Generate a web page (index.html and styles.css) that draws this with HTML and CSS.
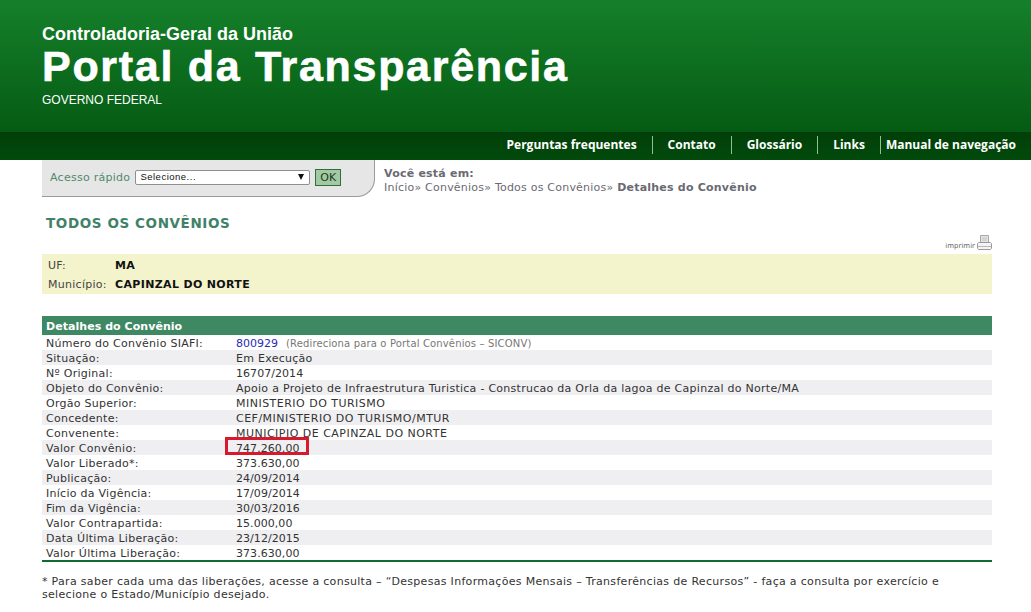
FILE: index.html
```html
<!DOCTYPE html>
<html lang="pt-BR">
<head>
  <meta charset="UTF-8" />
  <title>Portal da Transparência</title>
  <link rel="stylesheet" href="styles.css">
</head>
<body>
  <!-- Header -->
  <div class="header">
    <div class="org">Controladoria-Geral da União</div>
    <div class="portal">Portal da Transparência</div>
    <div class="gov">GOVERNO FEDERAL</div>
  </div>

  <!-- Menu -->
  <div class="menu">
    <a class="menu-item">Perguntas frequentes</a>
    <a class="menu-item">Contato</a>
    <a class="menu-item">Glossário</a>
    <a class="menu-item">Links</a>
    <a class="menu-item last">Manual de navegação</a>
  </div>

  <div class="page">
    <!-- Quick access and breadcrumb -->
    <div class="topbar">
      <div class="quick">
        <span class="quick-label">Acesso rápido</span>
        <div class="fake-select">Selecione...<span class="arrow"></span></div>
        <div class="ok">OK</div>
      </div>
      <div class="crumbs">
        <div class="crumbs-title">Você está em:</div>
        <div>Início» Convênios» Todos os Convênios» <b>Detalhes do Convênio</b></div>
      </div>
    </div>

    <h1 class="title">TODOS OS CONVÊNIOS</h1>

    <div class="print">
      <span>imprimir</span>
      <svg width="15" height="16" viewBox="0 0 15 16">
        <path d="M3.5 .5h8v7h-8z" fill="#e4e4e4" stroke="#a8a8a8"/>
        <path d="M5 3h5M5 5h5" stroke="#c4c4c4"/>
        <path d="M1.5 7.5h12l1 1v5l-1 1h-12l-1-1v-5z" fill="#f4f4f4" stroke="#9a9a9a"/>
        <path d="M1 11.5h13" stroke="#b8b8b8"/>
      </svg>
    </div>

    <div class="place">
      <div class="place-row"><span class="place-label">UF:</span><b>MA</b></div>
      <div class="place-row"><span class="place-label">Município:</span><b>CAPINZAL DO NORTE</b></div>
    </div>

    <div class="details-head">Detalhes do Convênio</div>
    <table class="details">
      <tr><td class="key">Número do Convênio SIAFI:</td><td><a class="siafi">800929</a><span class="note">(Redireciona para o Portal Convênios – SICONV)</span></td></tr>
      <tr><td class="key">Situação:</td><td>Em Execução</td></tr>
      <tr><td class="key">Nº Original:</td><td class="num">16707/2014</td></tr>
      <tr><td class="key">Objeto do Convênio:</td><td>Apoio a Projeto de Infraestrutura Turistica - Construcao da Orla da lagoa de Capinzal do Norte/MA</td></tr>
      <tr><td class="key">Orgão Superior:</td><td class="caps">MINISTERIO DO TURISMO</td></tr>
      <tr><td class="key">Concedente:</td><td class="caps">CEF/MINISTERIO DO TURISMO/MTUR</td></tr>
      <tr><td class="key">Convenente:</td><td class="caps">MUNICIPIO DE CAPINZAL DO NORTE</td></tr>
      <tr><td class="key">Valor Convênio:</td><td class="num marked-cell">747.260,00<span class="red-box"></span></td></tr>
      <tr><td class="key">Valor Liberado*:</td><td class="num">373.630,00</td></tr>
      <tr><td class="key">Publicação:</td><td class="num">24/09/2014</td></tr>
      <tr><td class="key">Início da Vigência:</td><td class="num">17/09/2014</td></tr>
      <tr><td class="key">Fim da Vigência:</td><td class="num">30/03/2016</td></tr>
      <tr><td class="key">Valor Contrapartida:</td><td class="num">15.000,00</td></tr>
      <tr><td class="key">Data Última Liberação:</td><td class="num">23/12/2015</td></tr>
      <tr><td class="key">Valor Última Liberação:</td><td class="num">373.630,00</td></tr>
    </table>

    <p class="footnote">* Para saber cada uma das liberações, acesse a consulta – “Despesas Informações Mensais – Transferências de Recursos” - faça a consulta por exercício e selecione o Estado/Município desejado.</p>
  </div>
</body>
</html>
```

FILE: styles.css
```css
body {
  margin: 0;
  background: #fff;
  font-family: "DejaVu Sans", Verdana, sans-serif;
  font-size: 11px;
  letter-spacing: 0.27px;
  color: #333;
  overflow: hidden;
}

.header {
  height: 132px;
  box-sizing: border-box;
  padding: 24px 0 0 42px;
  background: linear-gradient(to bottom, #15802b, #055b13);
  color: #fff;
  font-family: "Liberation Sans", Arial, sans-serif;
  letter-spacing: 0;
}

.org {
  font-size: 18px;
  font-weight: bold;
  line-height: 20px;
}

.portal {
  font-size: 43px;
  font-weight: bold;
  line-height: 44px;
  letter-spacing: 1.7px;
  -webkit-text-stroke: 0.6px #fff;
}

.gov {
  margin-top: 4px;
  font-size: 12px;
  line-height: 16px;
}

.menu {
  height: 28px;
  display: flex;
  justify-content: flex-end;
  align-items: center;
  padding: 0 15px 2px 0;
  box-sizing: border-box;
  background: linear-gradient(to bottom, #013f08, #024a0c);
  color: #fff;
  font-family: "Open Sans", sans-serif;
  font-size: 12px;
  font-weight: 700;
  letter-spacing: 0;
}

.menu-item {
  height: 18px;
  line-height: 18px;
  padding: 0 15px;
  border-right: 1px solid #8fbf96;
}

.menu-item.last {
  padding: 0 0 0 5px;
  border-right: 0;
}

.page {
  width: 950px;
  margin-left: 42px;
}

.topbar {
  display: flex;
  height: 37px;
}

.quick {
  width: 333px;
  height: 37px;
  box-sizing: border-box;
  display: flex;
  align-items: center;
  padding: 0 0 2px 8px;
  background: #e6e6e6;
  border-bottom: 1px solid #9a9a9a;
  border-right: 1px solid #9a9a9a;
  border-bottom-right-radius: 18px;
}

.quick-label {
  color: #4f8a6d;
  margin-right: 5px;
}

.fake-select {
  position: relative;
  width: 175px;
  height: 15px;
  box-sizing: border-box;
  padding-left: 4px;
  background: #fff;
  border: 1px solid #8f8f8f;
  border-radius: 2px;
  color: #111;
  font-family: "Liberation Sans", Arial, sans-serif;
  font-size: 9.5px;
  line-height: 12px;
  letter-spacing: 0.5px;
}

.arrow {
  position: absolute;
  top: 3px;
  right: 5px;
  border-left: 3.5px solid transparent;
  border-right: 3.5px solid transparent;
  border-top: 6px solid #111;
}

.ok {
  width: 26px;
  height: 17px;
  box-sizing: border-box;
  margin-left: 5px;
  border: 1px solid #2f6e3f;
  background: #a3c9a3;
  color: #1d3a24;
  text-align: center;
  font-size: 11px;
  line-height: 15px;
}

.crumbs {
  margin-left: 9px;
  padding-top: 7px;
  color: #6a6a72;
  line-height: 14px;
  letter-spacing: 0.22px;
}

.crumbs-title {
  font-weight: bold;
}

.title {
  margin: 17px 0 0 4px;
  color: #3f8268;
  font-family: "DejaVu Sans", Verdana, sans-serif;
  font-size: 13.5px;
  line-height: 18px;
  letter-spacing: 0.6px;
}

.print {
  height: 17px;
  margin: 2px 0 3px;
  display: flex;
  justify-content: flex-end;
  align-items: flex-end;
  gap: 2px;
  color: #666;
  font-size: 7px;
  line-height: 9px;
  letter-spacing: 0;
}

.place {
  height: 40px;
  box-sizing: border-box;
  padding: 2px 6px 0;
  background: #f3f3cc;
  color: #444;
}

.place-row {
  height: 19px;
  line-height: 19px;
  display: flex;
}

.place-row b {
  color: #111;
  letter-spacing: 0.35px;
}

.place-label {
  width: 67px;
}

.details-head {
  margin-top: 22px;
  height: 19px;
  padding-left: 4px;
  background: #3f8864;
  color: #fff;
  font-weight: bold;
  line-height: 21px;
  letter-spacing: 0.05px;
}

.details {
  width: 100%;
  border-collapse: collapse;
  border-bottom: 2px solid #106a35;
  color: #333;
}

.details td {
  height: 13px;
  padding: 2px 0 0;
  line-height: 13px;
  white-space: nowrap;
}

.details tr:nth-child(even) {
  background: #efeff1;
}

.details .key {
  width: 190px;
  padding-left: 4px;
}

.details .num {
  letter-spacing: 0.05px;
}

.details .caps {
  letter-spacing: 0.48px;
}

.siafi {
  color: #2a2ab8;
  margin-right: 8px;
  letter-spacing: 0;
}

.note {
  color: #777;
  font-size: 10px;
  letter-spacing: 0.15px;
}

.marked-cell {
  position: relative;
}

.red-box {
  position: absolute;
  top: -3px;
  left: -11px;
  width: 78px;
  height: 12px;
  border: 3px solid #d8182c;
}

.footnote {
  margin: 13px 0 0;
  color: #333;
  line-height: 13px;
  letter-spacing: 0.31px;
}
```
